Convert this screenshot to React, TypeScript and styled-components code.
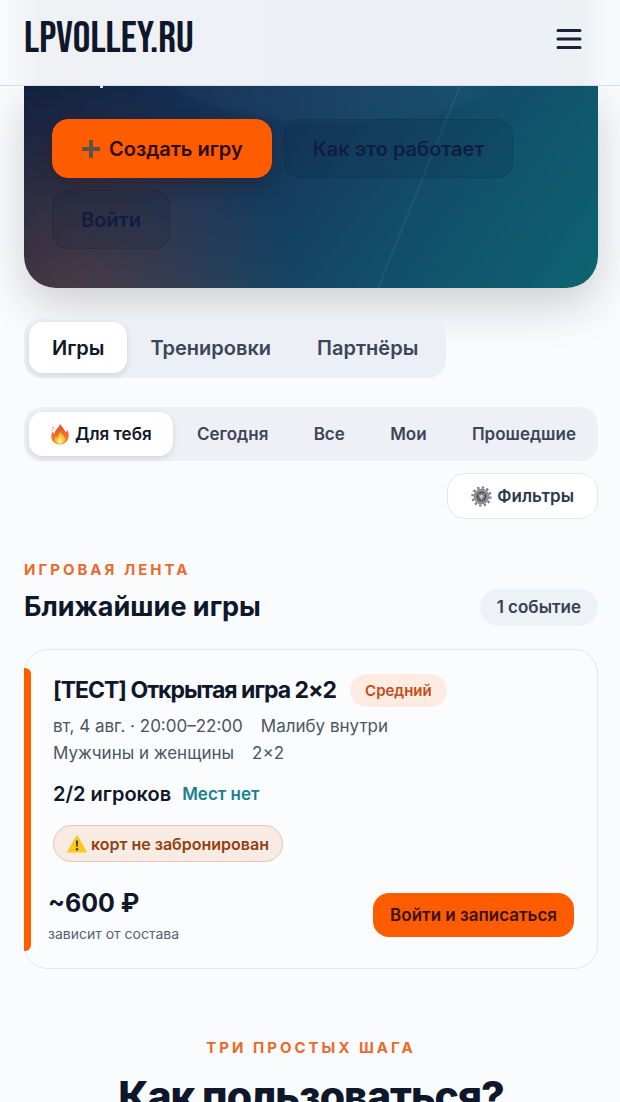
import React from "react";
import styled, { createGlobalStyle, css } from "styled-components";

const GlobalStyle = createGlobalStyle`
  *, *::before, *::after { box-sizing: border-box; }
  body {
    margin: 0;
    background: #fafbfd;
    color: #0f172a;
    font-family: Inter, "Noto Sans", "Liberation Sans", sans-serif;
  }
  button { font-family: inherit; border: 0; cursor: pointer; white-space: nowrap; }
  h1, h2, h3, p, ul { margin: 0; padding: 0; }
`;

const Page = styled.div`
  height: 100vh;
  overflow: hidden;
`;

const Header = styled.header`
  position: relative;
  z-index: 2;
  display: flex;
  align-items: center;
  justify-content: space-between;
  height: 86px;
  padding: 0 32px 8px 24px;
  border-bottom: 1px solid #d8dee4;
  background: linear-gradient(90deg, #f9fafc 0, #eff1f4 40px, #edf0f6 45%, #edf1f4 calc(100% - 34px), #f6f9fc calc(100% - 14px));
`;

const Logo = styled.a`
  color: #0f172a;
  font-family: "Bebas Neue", "Liberation Sans Narrow", "Liberation Sans", sans-serif;
  font-size: 44px;
  font-weight: 400;
  line-height: 48px;
  text-decoration: none;
`;

const MenuButton = styled.button`
  display: grid;
  place-items: center;
  width: 38px;
  height: 44px;
  padding: 0;
  background: none;
`;

const Main = styled.main`
  padding: 0 22px 0 24px;
`;

const Hero = styled.section`
  display: flex;
  flex-wrap: wrap;
  gap: 12px;
  position: relative;
  padding: 33px 28px 39px;
  border-radius: 0 0 32px 32px;
  overflow: hidden;
  background:
    radial-gradient(circle at 8% 112%, rgba(255, 92, 20, 0.24) 0, rgba(255, 92, 20, 0) 230px),
    radial-gradient(ellipse 180px 60px at 54% -10%, rgba(90, 150, 190, 0.1) 0, rgba(90, 150, 190, 0.07) 90%, rgba(90, 150, 190, 0) 100%),
    linear-gradient(125deg, #12203f 0, #15365a 38%, #124e6a 68%, #0c6470 100%);
`;

const HeroShadow = styled.div`
  border-radius: 0 0 32px 32px;
  box-shadow: 0 18px 44px rgba(20, 24, 30, 0.19);
`;

const CourtLine = styled.svg`
  position: absolute;
  inset: 0;
  width: 100%;
  height: 100%;
  pointer-events: none;
`;

const HeroButton = styled.button<{ $primary?: boolean }>`
  position: relative;
  display: inline-flex;
  align-items: center;
  justify-content: center;
  gap: 8px;
  height: 59px;
  padding: 0 28px;
  border: 1px solid rgba(8, 20, 44, 0.14);
  border-radius: 16px;
  background: rgba(10, 22, 50, 0.12);
  color: #101d40;
  font-size: 20px;
  font-weight: 600;
  ${(p) =>
    p.$primary &&
    css`
      border-color: #ff5c00;
      background: #ff5c00;
      color: #2a0d08;
      box-shadow: 0 8px 18px rgba(50, 15, 15, 0.3);
    `}
`;

const Tabs = styled.nav`
  display: flex;
  width: fit-content;
  margin-top: 29px;
  padding: 5px;
  border-radius: 18px;
  background: #eceff5;
`;

const Tab = styled.button<{ $active?: boolean }>`
  height: 51px;
  padding: 0 23px;
  border-radius: 14px;
  background: ${(p) => (p.$active ? "#ffffff" : "transparent")};
  box-shadow: ${(p) => (p.$active ? "0 2px 6px rgba(15, 23, 42, 0.13)" : "none")};
  color: ${(p) => (p.$active ? "#0f172a" : "#3b4658")};
  font-size: 20px;
  font-weight: 600;
`;

const Filters = styled.div`
  display: flex;
  justify-content: space-between;
  margin-top: 29px;
  padding: 5px 1px 5px 5px;
  border-radius: 18px;
  background: #eef0f6;
`;

const Filter = styled.button<{ $active?: boolean }>`
  display: inline-flex;
  align-items: center;
  gap: 5px;
  height: 44px;
  padding: 0 21px;
  border-radius: 14px;
  background: ${(p) => (p.$active ? "#ffffff" : "transparent")};
  box-shadow: ${(p) => (p.$active ? "0 2px 6px rgba(15, 23, 42, 0.13)" : "none")};
  color: ${(p) => (p.$active ? "#0f172a" : "#3b4658")};
  font-size: 17px;
  font-weight: 600;
`;

const FilterRow = styled.div`
  display: flex;
  justify-content: flex-end;
  margin-top: 12px;
`;

const SettingsButton = styled.button`
  display: inline-flex;
  align-items: center;
  gap: 5px;
  height: 46px;
  padding: 0 23px;
  border: 1px solid #e3e7ee;
  border-radius: 18px;
  background: #ffffff;
  color: #2c374a;
  font-size: 17px;
  font-weight: 600;
`;

const Eyebrow = styled.p`
  color: #ea6a2c;
  font-size: 15px;
  font-weight: 700;
  line-height: 20px;
  letter-spacing: 3px;
  text-transform: uppercase;
`;

const FeedHead = styled.div`
  display: flex;
  align-items: flex-end;
  justify-content: space-between;
  margin-top: 41px;
`;

const FeedTitle = styled.h2`
  margin-top: 8px;
  font-size: 27px;
  font-weight: 700;
  line-height: 38px;
`;

const Count = styled.span`
  padding: 0 17px;
  border-radius: 19px;
  background: #eef1f6;
  color: #364153;
  font-size: 17px;
  font-weight: 600;
  line-height: 37px;
`;

const Card = styled.article`
  position: relative;
  margin-top: 23px;
  padding: 23px 23px 22px 28px;
  border: 1px solid #e2e6ec;
  border-radius: 24px;
  background: #fbfcfe;
  &::before {
    content: "";
    position: absolute;
    left: -1px;
    top: 18px;
    bottom: 17px;
    width: 7px;
    border-radius: 0 6px 6px 0;
    background: #ff5c00;
  }
`;

const CardHead = styled.div`
  display: flex;
  align-items: center;
  gap: 14px;
`;

const CardTitle = styled.h3`
  font-size: 23px;
  font-weight: 700;
  line-height: 34px;
  letter-spacing: -1px;
  white-space: nowrap;
`;

const Level = styled.span`
  padding: 0 15px;
  border-radius: 17px;
  background: #feece2;
  color: #c44a16;
  font-size: 15px;
  font-weight: 600;
  line-height: 33px;
`;

const Meta = styled.ul`
  display: flex;
  flex-wrap: wrap;
  column-gap: 18px;
  max-width: 400px;
  margin-top: 6px;
  list-style: none;
  color: #4b5565;
  font-size: 17px;
  line-height: 27px;
`;

const Players = styled.p`
  display: flex;
  align-items: center;
  gap: 11px;
  margin-top: 13px;
  font-size: 20px;
  font-weight: 600;
  line-height: 28px;
`;

const Seats = styled.span`
  color: #1b7f92;
  font-size: 17px;
`;

const Warning = styled.p`
  display: flex;
  align-items: center;
  gap: 4px;
  width: fit-content;
  height: 37px;
  margin-top: 17px;
  padding: 0 13px;
  border: 1px solid #e6c5b2;
  border-radius: 19px;
  background: #f7ebe3;
  color: #93410f;
  font-size: 16px;
  font-weight: 600;
`;

const CardFoot = styled.div`
  display: flex;
  align-items: center;
  justify-content: space-between;
  margin: 22px 0 0 -5px;
`;

const Price = styled.p`
  font-size: 25px;
  font-weight: 700;
  line-height: 38px;
`;

const PriceNote = styled.p`
  color: #566072;
  font-size: 14px;
  line-height: 24px;
`;

const JoinButton = styled.button`
  height: 44px;
  padding: 0 17px;
  border-radius: 16px;
  background: #ff5c00;
  color: #3a1208;
  font-size: 17px;
  font-weight: 600;
`;

const Steps = styled.section`
  margin-top: 69px;
  text-align: center;
`;

const StepsTitle = styled.h2`
  margin-top: 10px;
  font-size: 41px;
  font-weight: 800;
  line-height: 56px;
  letter-spacing: -1px;
  white-space: nowrap;
`;

const MenuIcon = () => (
  <svg width="26" height="22" viewBox="0 0 26 22" fill="none" stroke="#1a2134" strokeWidth="3" strokeLinecap="round">
    <path d="M2 2.500h22M2 11h22M2 19.500h22" />
  </svg>
);

const PlusIcon = () => (
  <svg width="20" height="20" viewBox="0 0 20 20">
    <path d="M8 1h4v7h7v4h-7v7H8v-7H1V8h7z" fill="#5d5348" />
  </svg>
);

const FlameIcon = () => (
  <svg width="20" height="22" viewBox="0 0 20 22">
    <defs>
      <linearGradient id="flame" x1="0" y1="0" x2="0" y2="1">
        <stop offset="0" stopColor="#e8472c" />
        <stop offset="0.600" stopColor="#f4702a" />
        <stop offset="1" stopColor="#fb9a2b" />
      </linearGradient>
    </defs>
    <path d="M10 0.500c1 3 5 5.500 5.500 9 1-.6 1.200-1.800 1.300-2.700C18.600 9 19 11.500 18.600 14c-.7 4.300-4 7.400-8.600 7.400S1.600 18.500 1.300 14.200c-.2-2.600.8-4.400 1.700-5.700.3 1.200.8 1.900 1.700 2.300C4.500 6.500 9.700 5 10 .500z" fill="url(#flame)" />
    <path d="M10.300 8c.3 2.700 4.700 4.500 4.700 8.300 0 2.800-2.100 4.700-5 4.700s-5-1.800-5-4.500c0-1.500.6-2.500 1.200-3.200.4 1 .9 1.400 1.600 1.600C7.600 12 10.100 10.500 10.300 8z" fill="#fdc13c" />
    <path d="M10.200 13.500c.3 1.500 2.300 2.300 2.300 4.300 0 1.700-1 2.900-2.500 2.900s-2.500-1.200-2.500-2.800c0-1.900 2.300-2.500 2.700-4.400z" fill="#ffe98a" />
    <path d="M3 4.200l.9 1.200M2 7l.5.700" stroke="#f08a50" strokeWidth="1" strokeLinecap="round" />
  </svg>
);

const GearIcon = () => (
  <svg width="21" height="21" viewBox="0 0 21 21" fill="none">
    <circle cx="10.500" cy="10.500" r="9" stroke="#7c8086" strokeWidth="2.400" strokeDasharray="2.300 2.412" />
    <circle cx="10.500" cy="10.500" r="7" fill="#a2a5ab" stroke="#85888e" strokeWidth="1.600" />
    <circle cx="10.500" cy="10.500" r="4.300" fill="#777b84" stroke="#4c505a" strokeWidth="1.800" />
    <circle cx="10.500" cy="10.500" r="1.700" fill="#d3d6da" />
    <path d="M10.500 10.500L14 7.500M10.500 10.500L7.200 8M10.500 10.500v4" stroke="#b6b9be" strokeWidth="0.800" />
  </svg>
);

const WarningIcon = () => (
  <svg width="20" height="18" viewBox="0 0 20 18">
    <path d="M10 1.300L18.800 16.700H1.200z" fill="#fcc81e" stroke="#fcc81e" strokeWidth="1.800" strokeLinejoin="round" />
    <path d="M8.900 5.600h2.200l-.4 6.100H9.300z" fill="#3d3a36" />
    <circle cx="10" cy="14.200" r="1.200" fill="#3d3a36" />
  </svg>
);

const FILTERS = ["Сегодня", "Все", "Мои", "Прошедшие"];

export default function App() {
  return (
    <Page>
      <GlobalStyle />
      <Header>
        <Logo href="#">LPVOLLEY.RU</Logo>
        <MenuButton aria-label="Меню">
          <MenuIcon />
        </MenuButton>
      </Header>
      <Main>
        <HeroShadow>
          <Hero>
            <CourtLine viewBox="0 0 574 202" preserveAspectRatio="none" aria-hidden="true">
              <path d="M354 202L436 0" stroke="#7fb0c0" strokeOpacity="0.1" strokeWidth="2" />
              <path d="M76 0h3v2h-3z" fill="#dfe6ee" />
            </CourtLine>
            <HeroButton $primary>
              <PlusIcon />
              Создать игру
            </HeroButton>
            <HeroButton>Как это работает</HeroButton>
            <HeroButton>Войти</HeroButton>
          </Hero>
        </HeroShadow>

        <Tabs>
          <Tab $active>Игры</Tab>
          <Tab>Тренировки</Tab>
          <Tab>Партнёры</Tab>
        </Tabs>

        <Filters>
          <Filter $active>
            <FlameIcon />
            Для тебя
          </Filter>
          {FILTERS.map((label) => (
            <Filter key={label}>{label}</Filter>
          ))}
        </Filters>
        <FilterRow>
          <SettingsButton>
            <GearIcon />
            Фильтры
          </SettingsButton>
        </FilterRow>

        <section>
          <FeedHead>
            <div>
              <Eyebrow>Игровая лента</Eyebrow>
              <FeedTitle>Ближайшие игры</FeedTitle>
            </div>
            <Count>1 событие</Count>
          </FeedHead>
          <Card>
            <CardHead>
              <CardTitle>[ТЕСТ] Открытая игра 2×2</CardTitle>
              <Level>Средний</Level>
            </CardHead>
            <Meta>
              <li>вт, 4 авг. · 20:00–22:00</li>
              <li>Малибу внутри</li>
              <li>Мужчины и женщины</li>
              <li>2×2</li>
            </Meta>
            <Players>
              2/2 игроков <Seats>Мест нет</Seats>
            </Players>
            <Warning>
              <WarningIcon />
              корт не забронирован
            </Warning>
            <CardFoot>
              <div>
                <Price>~600 ₽</Price>
                <PriceNote>зависит от состава</PriceNote>
              </div>
              <JoinButton>Войти и записаться</JoinButton>
            </CardFoot>
          </Card>
        </section>

        <Steps>
          <Eyebrow>Три простых шага</Eyebrow>
          <StepsTitle>Как пользоваться?</StepsTitle>
        </Steps>
      </Main>
    </Page>
  );
}
